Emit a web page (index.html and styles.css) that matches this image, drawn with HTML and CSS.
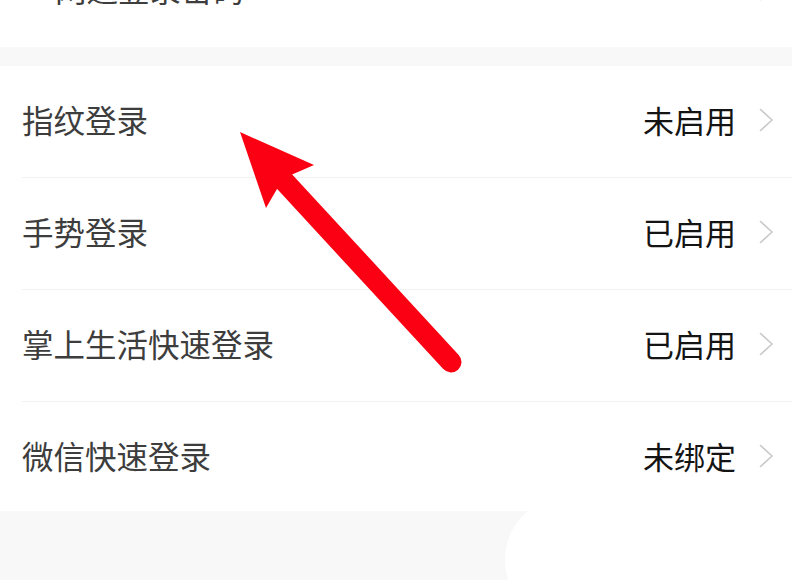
FILE: index.html
```html
<!DOCTYPE html>
<html lang="zh-CN">
<head>
<meta charset="utf-8">
<title>登录设置</title>
<link rel="stylesheet" href="styles.css">
</head>
<body>
<div class="page">
  <section class="group group-top">
    <div class="row row-top">
      <span class="label label-indent">网通登录密码</span>
      <span class="value"></span>
      <svg class="chev" viewBox="0 0 16 26" width="16" height="26"><path d="M2 2 L14 13 L2 24" fill="none" stroke="#c9c9c9" stroke-width="1.6"/></svg>
    </div>
  </section>
  <div class="gap"></div>
  <section class="group">
    <div class="row">
      <span class="label">指纹登录</span>
      <span class="value">未启用</span>
      <svg class="chev" viewBox="0 0 16 26" width="16" height="26"><path d="M2 2 L14 13 L2 24" fill="none" stroke="#c9c9c9" stroke-width="1.6"/></svg>
    </div>
    <div class="row">
      <span class="label">手势登录</span>
      <span class="value">已启用</span>
      <svg class="chev" viewBox="0 0 16 26" width="16" height="26"><path d="M2 2 L14 13 L2 24" fill="none" stroke="#c9c9c9" stroke-width="1.6"/></svg>
    </div>
    <div class="row">
      <span class="label">掌上生活快速登录</span>
      <span class="value">已启用</span>
      <svg class="chev" viewBox="0 0 16 26" width="16" height="26"><path d="M2 2 L14 13 L2 24" fill="none" stroke="#c9c9c9" stroke-width="1.6"/></svg>
    </div>
    <div class="row row-last">
      <span class="label">微信快速登录</span>
      <span class="value">未绑定</span>
      <svg class="chev" viewBox="0 0 16 26" width="16" height="26"><path d="M2 2 L14 13 L2 24" fill="none" stroke="#c9c9c9" stroke-width="1.6"/></svg>
    </div>
  </section>
  <div class="footer">
    <div class="pill"></div>
  </div>
  <svg class="arrow" viewBox="0 0 792 580" width="792" height="580">
    <line x1="284" y1="181" x2="451" y2="362" stroke="#fb0012" stroke-width="21" stroke-linecap="round"/>
    <polygon points="240,132 314,165 291,175 277,189 266,208" fill="#fb0012"/>
  </svg>
</div>
</body>
</html>
```
FILE: styles.css
```css
html, body {
  margin: 0;
  padding: 0;
}
body {
  width: 792px;
  height: 580px;
  overflow: hidden;
  background: #f8f8f8;
  font-family: "Noto Sans CJK SC", "Noto Sans", sans-serif;
}
.page {
  position: relative;
  width: 792px;
  height: 580px;
  overflow: hidden;
}
.group {
  background: #ffffff;
  padding-left: 22px;
}
.group-top {
  margin-top: -65px;
}
.gap {
  height: 19px;
}
.row {
  box-sizing: border-box;
  display: flex;
  align-items: center;
  height: 112px;
  padding-bottom: 4px;
  border-bottom: 1px solid #f1f1f1;
}
.row-top,
.row-last {
  border-bottom: none;
}
.row-last {
  height: 109px;
  padding-bottom: 2px;
}
.label {
  flex: 1;
  font-size: 31.5px;
  color: #3d3d3d;
  line-height: 1;
}
.label-indent {
  padding-left: 33px;
}
.value {
  font-size: 31px;
  color: #141414;
  line-height: 1;
}
.chev {
  margin-left: 22px;
  margin-right: 18px;
  flex-shrink: 0;
}
.footer {
  display: flex;
  height: 70px;
}
.pill {
  flex-shrink: 0;
  margin-left: 505px;
  margin-top: -15px;
  width: 320px;
  height: 128px;
  border-radius: 64px;
  background: #ffffff;
}
.arrow {
  position: absolute;
  left: 0;
  top: 0;
  pointer-events: none;
}
```
